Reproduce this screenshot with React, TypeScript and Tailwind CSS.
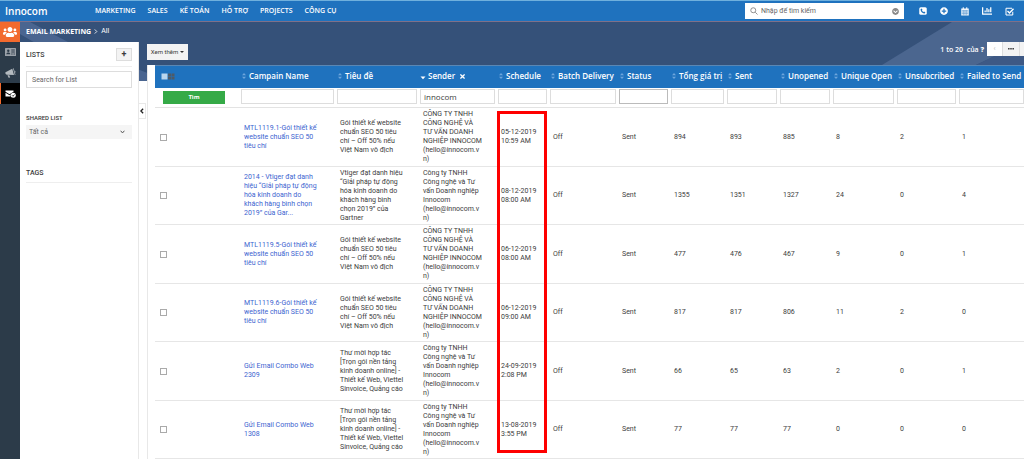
import React from "react";
import { FaPlusCircle, FaUsers, FaChevronCircleDown, FaChartBar, FaTimes } from "react-icons/fa";

const nav = ["MARKETING", "SALES", "KẾ TOÁN", "HỖ TRỢ", "PROJECTS", "CÔNG CỤ"];

const columns = [
  { name: "Campain Name", value: "" },
  { name: "Tiêu đề", value: "" },
  { name: "Sender", value: "innocom" },
  { name: "Schedule", value: "" },
  { name: "Batch Delivery", value: "" },
  { name: "Status", value: "" },
  { name: "Tổng giá trị", value: "" },
  { name: "Sent", value: "" },
  { name: "Unopened", value: "" },
  { name: "Unique Open", value: "" },
  { name: "Unsubcribed", value: "" },
  { name: "Failed to Send", value: "" },
];

const upper = ["CÔNG TY TNHH", "CÔNG NGHỆ VÀ", "TƯ VẤN DOANH", "NGHIỆP INNOCOM", "(hello@innocom.v", "n)"];
const lower = ["Công ty TNHH", "Công nghệ và Tư", "vấn Doanh nghiệp", "Innocom", "(hello@innocom.v", "n)"];
const seoTitle = ["Gói thiết kế website", "chuẩn SEO 50 tiêu", "chí – Off 50% nếu", "Việt Nam vô địch"];
const comboTitle = ["Thư mời hợp tác", "[Trọn gói nền tảng", "kinh doanh online] -", "Thiết kế Web, Viettel", "Sinvoice, Quảng cáo"];

const rows = [
  { name: ["MTL1119.1-Gói thiết kế", "website chuẩn SEO 50", "tiêu chí"], title: seoTitle, sender: upper, date: ["05-12-2019", "10:59 AM"], n: [894, 893, 885, 8, 2, 1] },
  { name: ["2014 - Vtiger đạt danh", "hiệu “Giải pháp tự động", "hóa kinh doanh do", "khách hàng bình chọn", "2019” của Gar..."], title: ["Vtiger đạt danh hiệu", "“Giải pháp tự động", "hóa kinh doanh do", "khách hàng bình", "chọn 2019” của", "Gartner"], sender: lower, date: ["08-12-2019", "08:00 AM"], n: [1355, 1351, 1327, 24, 0, 4] },
  { name: ["MTL1119.5-Gói thiết kế", "website chuẩn SEO 50", "tiêu chí"], title: seoTitle, sender: upper, date: ["06-12-2019", "08:00 AM"], n: [477, 476, 467, 9, 0, 1] },
  { name: ["MTL1119.6-Gói thiết kế", "website chuẩn SEO 50", "tiêu chí"], title: seoTitle, sender: upper, date: ["06-12-2019", "09:00 AM"], n: [817, 817, 806, 11, 2, 0] },
  { name: ["Gửi Email Combo Web", "2309"], title: comboTitle, sender: lower, date: ["24-09-2019", "2:08 PM"], n: [66, 65, 63, 2, 0, 1] },
  { name: ["Gửi Email Combo Web", "1308"], title: comboTitle, sender: lower, date: ["13-08-2019", "3:55 PM"], n: [77, 77, 77, 0, 0, 0] },
];

function Lines({ text }: { text: string[] }) {
  return (
    <>
      {text.map((line, i) => (
        <span key={i} className="block whitespace-nowrap">{line}</span>
      ))}
    </>
  );
}

function SortIcon({ active }: { active: boolean }) {
  return active ? (
    <svg viewBox="0 0 6 10" className="h-[10px] w-[6px] shrink-0" aria-hidden="true">
      <path d="M0.5 5.5h5L3 8.200z" fill="#fff" />
    </svg>
  ) : (
    <svg viewBox="0 0 6 10" className="h-[10px] w-[6px] shrink-0" aria-hidden="true">
      <path d="M1 4.2L3 1.9l2 2.3zM1 5.8h4L3 8.1z" fill="#6ea6dc" />
    </svg>
  );
}

function MailCheck() {
  return (
    <svg viewBox="0 0 22 16" className="h-[8px] w-[11px]" aria-hidden="true">
      <path d="M1 1h16v2.500L9 8.500 1 3.500z" fill="#fff" />
      <path d="M1 5.500l8 5 3-2A6 6 0 0 0 11 13H1z" fill="#fff" />
      <circle cx="16.500" cy="10.500" r="5" fill="#fff" />
      <path d="M14 10.500l2 2 3-3.500" stroke="#000" strokeWidth="1.500" fill="none" />
    </svg>
  );
}

function CardIcon() {
  return (
    <svg viewBox="0 0 11 8" className="h-[8px] w-[11px]" aria-hidden="true">
      <rect width="11" height="8" rx="0.600" fill="#9aa1a8" />
      <circle cx="3.300" cy="2.800" r="1.200" fill="#2c3b49" />
      <path d="M1.300 6.200c0-2.400 4-2.400 4 0zM6.300 1.600h3.500v1H6.300zM6.300 3.600h3.500v1H6.300zM6.300 5.500h1.300v1H6.300zM8.500 5.500h1.300v1H8.500z" fill="#2c3b49" />
    </svg>
  );
}

function MegaphoneIcon() {
  return (
    <svg viewBox="0 0 22 20" className="h-[10px] w-[11px]" fill="#b4babf" aria-hidden="true">
      <path d="M1 8.500L14.500 1.500 18 14 4.500 13.500C1 13.500 0 9.500 1 8.500z" />
      <path d="M5 14.500l3.500 0.200 1.800 4.300-3 0.500z" />
      <path d="M16 1l1.300-0.400 3.700 13-1.300 0.400z" />
      <path d="M19 5.500c2 0 2.800 3 1 4z" />
    </svg>
  );
}

function PhoneIcon() {
  return (
    <svg viewBox="0 0 16 16" className="size-[8px]" aria-hidden="true">
      <rect x="0.500" y="0.500" width="15" height="15" rx="3" fill="#fff" />
      <path d="M5.200 3.200L7 5.700 5.900 7.200c0.600 1.300 1.600 2.300 2.900 2.900L10.300 9l2.500 1.800c-0.300 1.600-1.500 2.200-2.800 2C6.300 12.200 3.800 9.700 3.200 6c-0.200-1.300 0.400-2.500 2-2.800z" fill="#1f72be" />
    </svg>
  );
}

function CalendarIcon() {
  return (
    <svg viewBox="0 0 16 17" className="h-[9px] w-[8px]" aria-hidden="true">
      <path d="M0.500 2.500h15V16.500H0.500z" fill="#fff" />
      <path d="M3.500 0h2v4h-2zM10.500 0h2v4h-2z" fill="#fff" />
      <path d="M1.500 6.200h13M1.500 9.500h13M1.500 12.800h13M4.500 6v10M8 6v10M11.500 6v10" stroke="#1f72be" strokeWidth="0.900" />
    </svg>
  );
}

function TaskIcon() {
  return (
    <svg viewBox="0 0 18 18" className="size-[9px]" fill="none" stroke="#fff" aria-hidden="true">
      <path d="M15.500 9.500v6.500H2V2.500h12" strokeWidth="2" />
      <path d="M5 8l4 4 8-8.500" strokeWidth="2.800" />
    </svg>
  );
}

export default function App() {
  return (
    <div className="flex h-screen flex-col overflow-hidden bg-white font-['Roboto','Liberation_Sans',sans-serif] text-[7px] leading-[9px] text-[#3c3c3c]">
      <header className="flex h-[22px] shrink-0 items-center border-t border-b border-t-[#6fb0dd] border-b-[#7f7089] bg-[#1f72be] text-white">
        <a href="#" className="w-[95px] shrink-0 pl-[5px] font-['Open_Sans',sans-serif] text-[10px] leading-[18px] font-semibold">Innocom</a>
        <nav className="flex gap-[12px] pb-[2px] font-['Open_Sans',sans-serif] font-semibold whitespace-nowrap">
          {nav.map((n) => <a key={n} href="#">{n}</a>)}
        </nav>
        <label className="mr-[15px] ml-auto flex h-[16px] w-[159px] items-center gap-[3px] bg-white px-[5px]">
          <svg viewBox="0 0 16 16" className="size-[8px] shrink-0" fill="none" stroke="#777" strokeWidth="1.600" aria-hidden="true"><circle cx="6.500" cy="6.500" r="5" /><path d="M10.500 10.500L15 15" /></svg>
          <input aria-label="Nhập để tìm kiếm" placeholder="Nhập để tìm kiếm" className="min-w-0 flex-1 outline-none placeholder:text-[#666]" />
          <FaChevronCircleDown className="size-[7px] text-[#888]" />
        </label>
        <div className="mr-[10px] flex items-center gap-[13px]">
          <button aria-label="Phone"><PhoneIcon /></button>
          <button aria-label="Add"><FaPlusCircle className="size-[8px]" /></button>
          <button aria-label="Calendar"><CalendarIcon /></button>
          <button aria-label="Reports"><FaChartBar className="size-[10px]" /></button>
          <button aria-label="Tasks"><TaskIcon /></button>
        </div>
      </header>

      <div className="flex min-h-0 flex-1">
        <aside className="flex w-[20px] shrink-0 flex-col bg-[#2c3b49]">
          <a href="#" aria-label="Marketing" className="flex h-[20px] items-center justify-center bg-[#f26a2e] text-white"><FaUsers className="size-[14px]" /></a>
          <a href="#" aria-label="Contacts" className="flex h-[20px] items-center justify-center"><CardIcon /></a>
          <a href="#" aria-label="Campaigns" className="flex h-[21px] items-center justify-center"><MegaphoneIcon /></a>
          <a href="#" aria-label="Email marketing" className="flex h-[21px] items-center justify-center border-l border-[#f26a2e] bg-black"><MailCheck /></a>
        </aside>

        <div className="relative isolate flex min-w-0 flex-1 flex-col">
          <svg viewBox="0 0 1004 59" preserveAspectRatio="none" className="absolute inset-x-0 top-0 -z-10 h-[59px] w-full" aria-hidden="true">
            <rect width="1004" height="59" fill="#355179" />
            <path d="M0 0h10L48 20l100 39H80L0 12z" fill="#4a6590" />
            <path d="M862 43L932 0h72v20l-48 23z" fill="#4b668f" />
            <path d="M956 43l48-23v23z" fill="#3e5985" />
          </svg>
          <div className="flex h-[20px] shrink-0 items-center gap-[3px] px-[6px] pb-[1px] text-white">
            <span className="font-['Open_Sans',sans-serif] font-bold">EMAIL MARKETING</span>
            <svg viewBox="0 0 4 6" className="h-[5px] w-[4px]" fill="none" stroke="#fff" aria-hidden="true"><path d="M0.500 0.500L3 3 0.500 5.500" /></svg>
            <a href="#">All</a>
          </div>

          <div className="flex min-h-0 flex-1">
            <aside className="flex w-[119px] shrink-0 flex-col border-r border-[#e8e8e8] bg-white px-[6px]">
              <div className="flex h-[25px] items-center justify-between border-b border-[#eee]">
                <h2 className="pt-[2px] font-medium">LISTS</h2>
                <button aria-label="Add list" className="h-[13px] w-[16px] border border-[#ddd] bg-[#f3f3f3] text-[9px] leading-[10px] font-bold">+</button>
              </div>
              <input aria-label="Search for List" placeholder="Search for List" className="mt-[4px] h-[17px] border border-[#ddd] px-[5px] placeholder:text-[#666]" />
              <label htmlFor="shared" className="mt-[25px] text-[6px] font-medium">SHARED LIST</label>
              <div className="mt-[3px] grid h-[14px] items-center bg-[#f5f5f5]">
                <select id="shared" className="col-start-1 row-start-1 h-[14px] appearance-none px-[3px] text-[#666]"><option>Tất cả</option></select>
                <svg viewBox="0 0 8 6" className="pointer-events-none col-start-1 row-start-1 mr-[7px] h-[4px] w-[5px] justify-self-end" fill="none" stroke="#555" strokeWidth="1.600" aria-hidden="true"><path d="M1 1l3 3.500L7 1" /></svg>
              </div>
              <h2 className="mt-[30px] border-b border-[#eee] pb-[4px] font-medium">TAGS</h2>
            </aside>
            <button aria-label="Collapse" className="mt-[61px] flex h-[16px] w-[7px] shrink-0 items-center justify-center border border-l-0 border-[#e8e8e8] bg-white">
              <svg viewBox="0 0 5 8" className="h-[6px] w-[4px]" fill="none" stroke="#222" strokeWidth="1.800" aria-hidden="true"><path d="M4 1L1 4l3 3" /></svg>
            </button>
            <main className="flex min-w-0 flex-1 flex-col pl-[1px]">
              <div className="flex h-[23px] shrink-0 items-start justify-between">
                <button className="mt-[2px] flex h-[16px] w-[41px] items-center justify-center gap-[2px] bg-[#f3f3f3] pb-[1px] text-[6px] whitespace-nowrap">Xem thêm <svg viewBox="0 0 4 2" className="h-[2px] w-[4px]" aria-hidden="true"><path d="M0 0h4L2 2z" fill="#333" /></svg></button>
                <div className="flex items-center text-white">
                  <span className="mr-[3px] font-['Open_Sans',sans-serif] font-semibold">1 to 20&nbsp; của <b>?</b></span>
                  <button aria-label="Previous" className="h-[14px] w-[15px] bg-white text-[#bbb]">‹</button>
                  <button aria-label="Pages" className="flex h-[14px] w-[18px] items-center justify-center border-x border-[#ddd] bg-[#f3f3f3]"><svg viewBox="0 0 6 2" className="h-[2px] w-[6px]" fill="#444" aria-hidden="true"><path d="M0 0h1.600v1.600H0zM2.200 0h1.600v1.600H2.200zM4.400 0H6v1.600H4.400z" /></svg></button>
                  <button aria-label="Next" className="h-[14px] w-[4px] bg-[#f3f3f3]" />
                </div>
              </div>
              <div className="relative min-h-0 flex-1 border-l border-[#e8e8e8] bg-white pl-[7px]">
                <table className="w-full table-fixed border-collapse">
                  <colgroup>
                    <col className="w-[86px]" /><col className="w-[96px]" /><col className="w-[83px]" /><col className="w-[78px]" /><col className="w-[52px]" /><col className="w-[69px]" /><col className="w-[52px]" /><col className="w-[56px]" /><col className="w-[53px]" /><col className="w-[53px]" /><col className="w-[64px]" /><col className="w-[62px]" /><col />
                  </colgroup>
                  <thead className="font-['Open_Sans',sans-serif]">
                    <tr className="h-[22px] border-t border-[#5a87b4] bg-[#1f72be] text-left text-[8px] leading-[10px] whitespace-nowrap text-white">
                      <th className="pl-[6px]"><svg viewBox="0 0 14 7" className="h-[7px] w-[14px]" aria-hidden="true"><path d="M0.500 0.500h6v6h-6z" fill="#b9d5ee" /><path d="M7 0.500h3v2.700H7zM10.500 0.500h3v2.700h-3zM7 3.700h3v2.700H7zM10.500 3.700h3v2.700h-3z" fill="#4f5a66" /></svg></th>
                      {columns.map((c) => (
                        <th key={c.name} className="pb-[1px] font-semibold">
                          <span className="flex items-center gap-[2px]"><SortIcon active={c.name === "Sender"} />{c.name}{c.name === "Sender" && <FaTimes className="ml-[2px] size-[7px]" />}</span>
                        </th>
                      ))}
                    </tr>
                    <tr className="h-[20px] border-b border-[#e3e3e3] bg-white">
                      <td className="pl-[8px]"><button className="block h-[13px] w-[62px] bg-[#35aa47] text-[6px] font-bold text-white">Tìm</button></td>
                      {columns.map((c) => (
                        <td key={c.name} className="pr-[3px] pb-[1px] last:pr-0">
                          {c.name === "Status"
                            ? <select aria-label={c.name} className="block h-[15px] w-full appearance-none border border-[#bbb] bg-white"><option></option></select>
                            : <input aria-label={c.name} defaultValue={c.value} className="block h-[15px] w-full border border-[#ddd] px-[3px] text-[8px]" />}
                        </td>
                      ))}
                    </tr>
                  </thead>
                  <tbody>
                    {rows.map((r, i) => (
                      <tr key={i} className="border-b border-[#e6e6e6] odd:h-[59px] even:h-[58px] [&>td]:py-0 [&>td]:pl-[3px]">
                        <td><input type="checkbox" aria-label={r.name.join(" ")} className="ml-[2px] block size-[7px] appearance-none border border-[#aaa] bg-white" /></td>
                        <td className="text-[#3c64d0]"><a href="#"><Lines text={r.name} /></a></td>
                        <td><Lines text={r.title} /></td>
                        <td><Lines text={r.sender} /></td>
                        <td><Lines text={r.date} /></td>
                        <td>Off</td>
                        <td>Sent</td>
                        {r.n.map((v, j) => <td key={j}>{v}</td>)}
                      </tr>
                    ))}
                  </tbody>
                </table>
                <div className="pointer-events-none absolute top-[46px] left-[349px] h-[342px] w-[50px] border-3 border-[#fe0000]" aria-hidden="true" />
              </div>
            </main>
          </div>
        </div>
      </div>
    </div>
  );
}
